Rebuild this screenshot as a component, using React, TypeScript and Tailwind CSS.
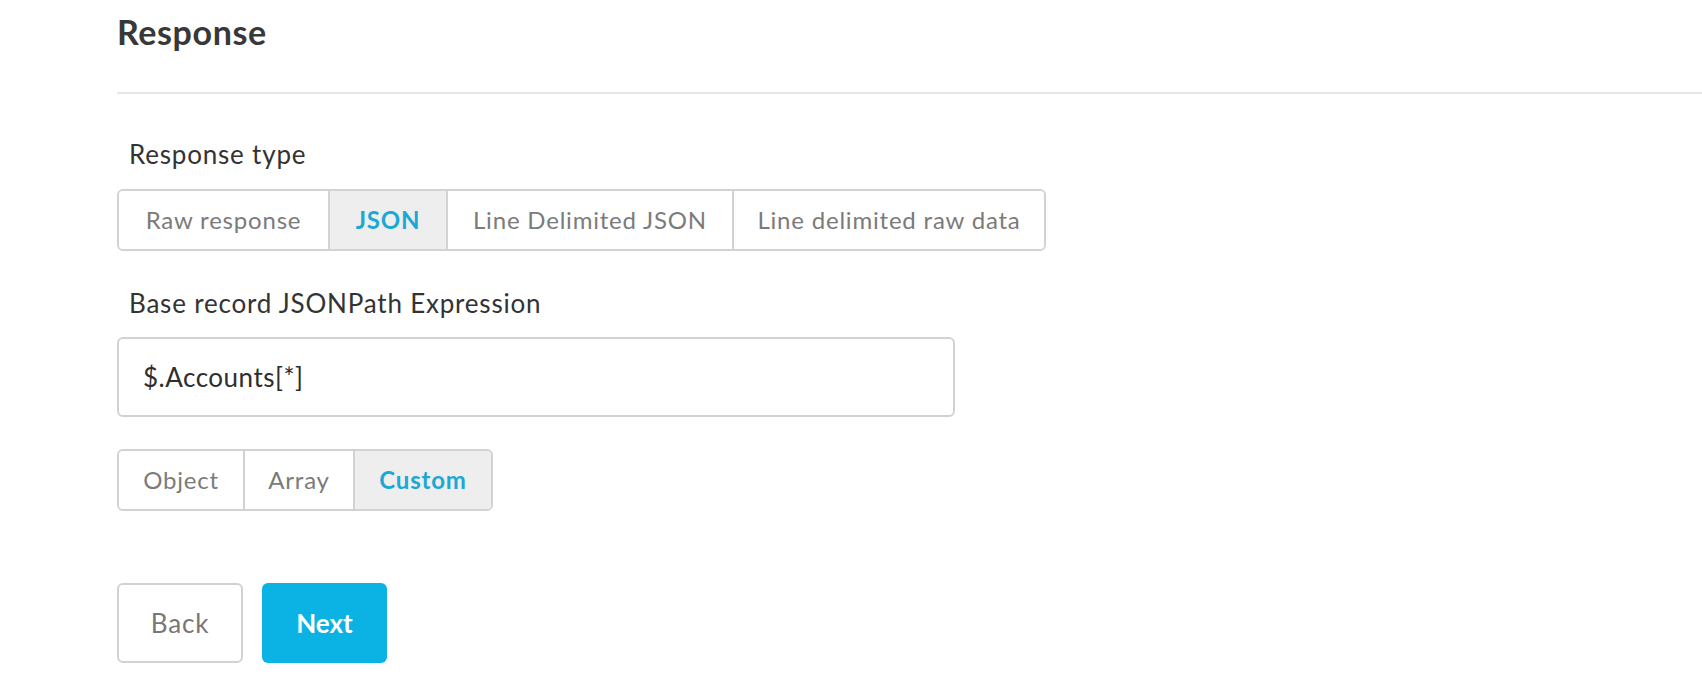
import React from "react";

const font = { fontFamily: "Lato, 'Open Sans', sans-serif" };

function Segmented({ items, active, widths }: { items: string[]; active: number; widths: string[] }) {
  return (
    <div className="flex h-[62px] w-max overflow-hidden rounded-[6px] border-2 border-[#d2d2d2]">
      {items.map((it, i) => (
        <div
          key={it}
          className={
            "flex items-center justify-center text-[24px] tracking-[0.8px] " +
            widths[i] +
            (i > 0 ? " border-l-2 border-[#d2d2d2]" : "") +
            (i === active ? " bg-[#eeeeee] font-bold text-[#1ba8d5]" : " bg-white text-[#7b7b7b]")
          }
        >
          {it}
        </div>
      ))}
    </div>
  );
}

export default function App() {
  return (
    <div className="min-h-[688px] w-full bg-white" style={font}>
      <div className="pl-[117px]">
        <h1 className="pt-[12px] text-[34px] leading-[40px] font-bold tracking-[0.6px] text-[#383838]">Response</h1>
        <div className="mt-[40px] h-[2px] bg-[#e6e6e6]" />
        <div className="pt-[45px] pl-[12px] text-[26px] leading-[30px] tracking-[0.8px] text-[#333333]">
          Response type
        </div>
        <div className="mt-[20px]">
          <Segmented
            items={["Raw response", "JSON", "Line Delimited JSON", "Line delimited raw data"]}
            active={1}
            widths={["w-[209px]", "w-[118px]", "w-[286px]", "w-[312px]"]}
          />
        </div>
        <div className="mt-[37px] pl-[12px] text-[26px] leading-[30px] tracking-[0.8px] text-[#333333]">
          Base record JSONPath Expression
        </div>
        <div className="mt-[19px] flex h-[80px] w-[838px] items-center rounded-[6px] border-2 border-[#d2d2d2] pl-[24px] text-[26px] tracking-[0.5px] text-[#2e2e2e]">
          $.Accounts[*]
        </div>
        <div className="mt-[32px]">
          <Segmented items={["Object", "Array", "Custom"]} active={2} widths={["w-[124px]", "w-[110px]", "w-[138px]"]} />
        </div>
        <div className="mt-[72px] flex gap-[19px]">
          <button className="flex h-[80px] w-[126px] items-center justify-center rounded-[6px] border-2 border-[#d2d2d2] bg-white text-[26px] tracking-[0.8px] text-[#777777]">
            Back
          </button>
          <button className="flex h-[80px] w-[125px] items-center justify-center rounded-[6px] bg-[#0ab3e3] text-[26px] font-bold text-white">
            Next
          </button>
        </div>
      </div>
    </div>
  );
}
